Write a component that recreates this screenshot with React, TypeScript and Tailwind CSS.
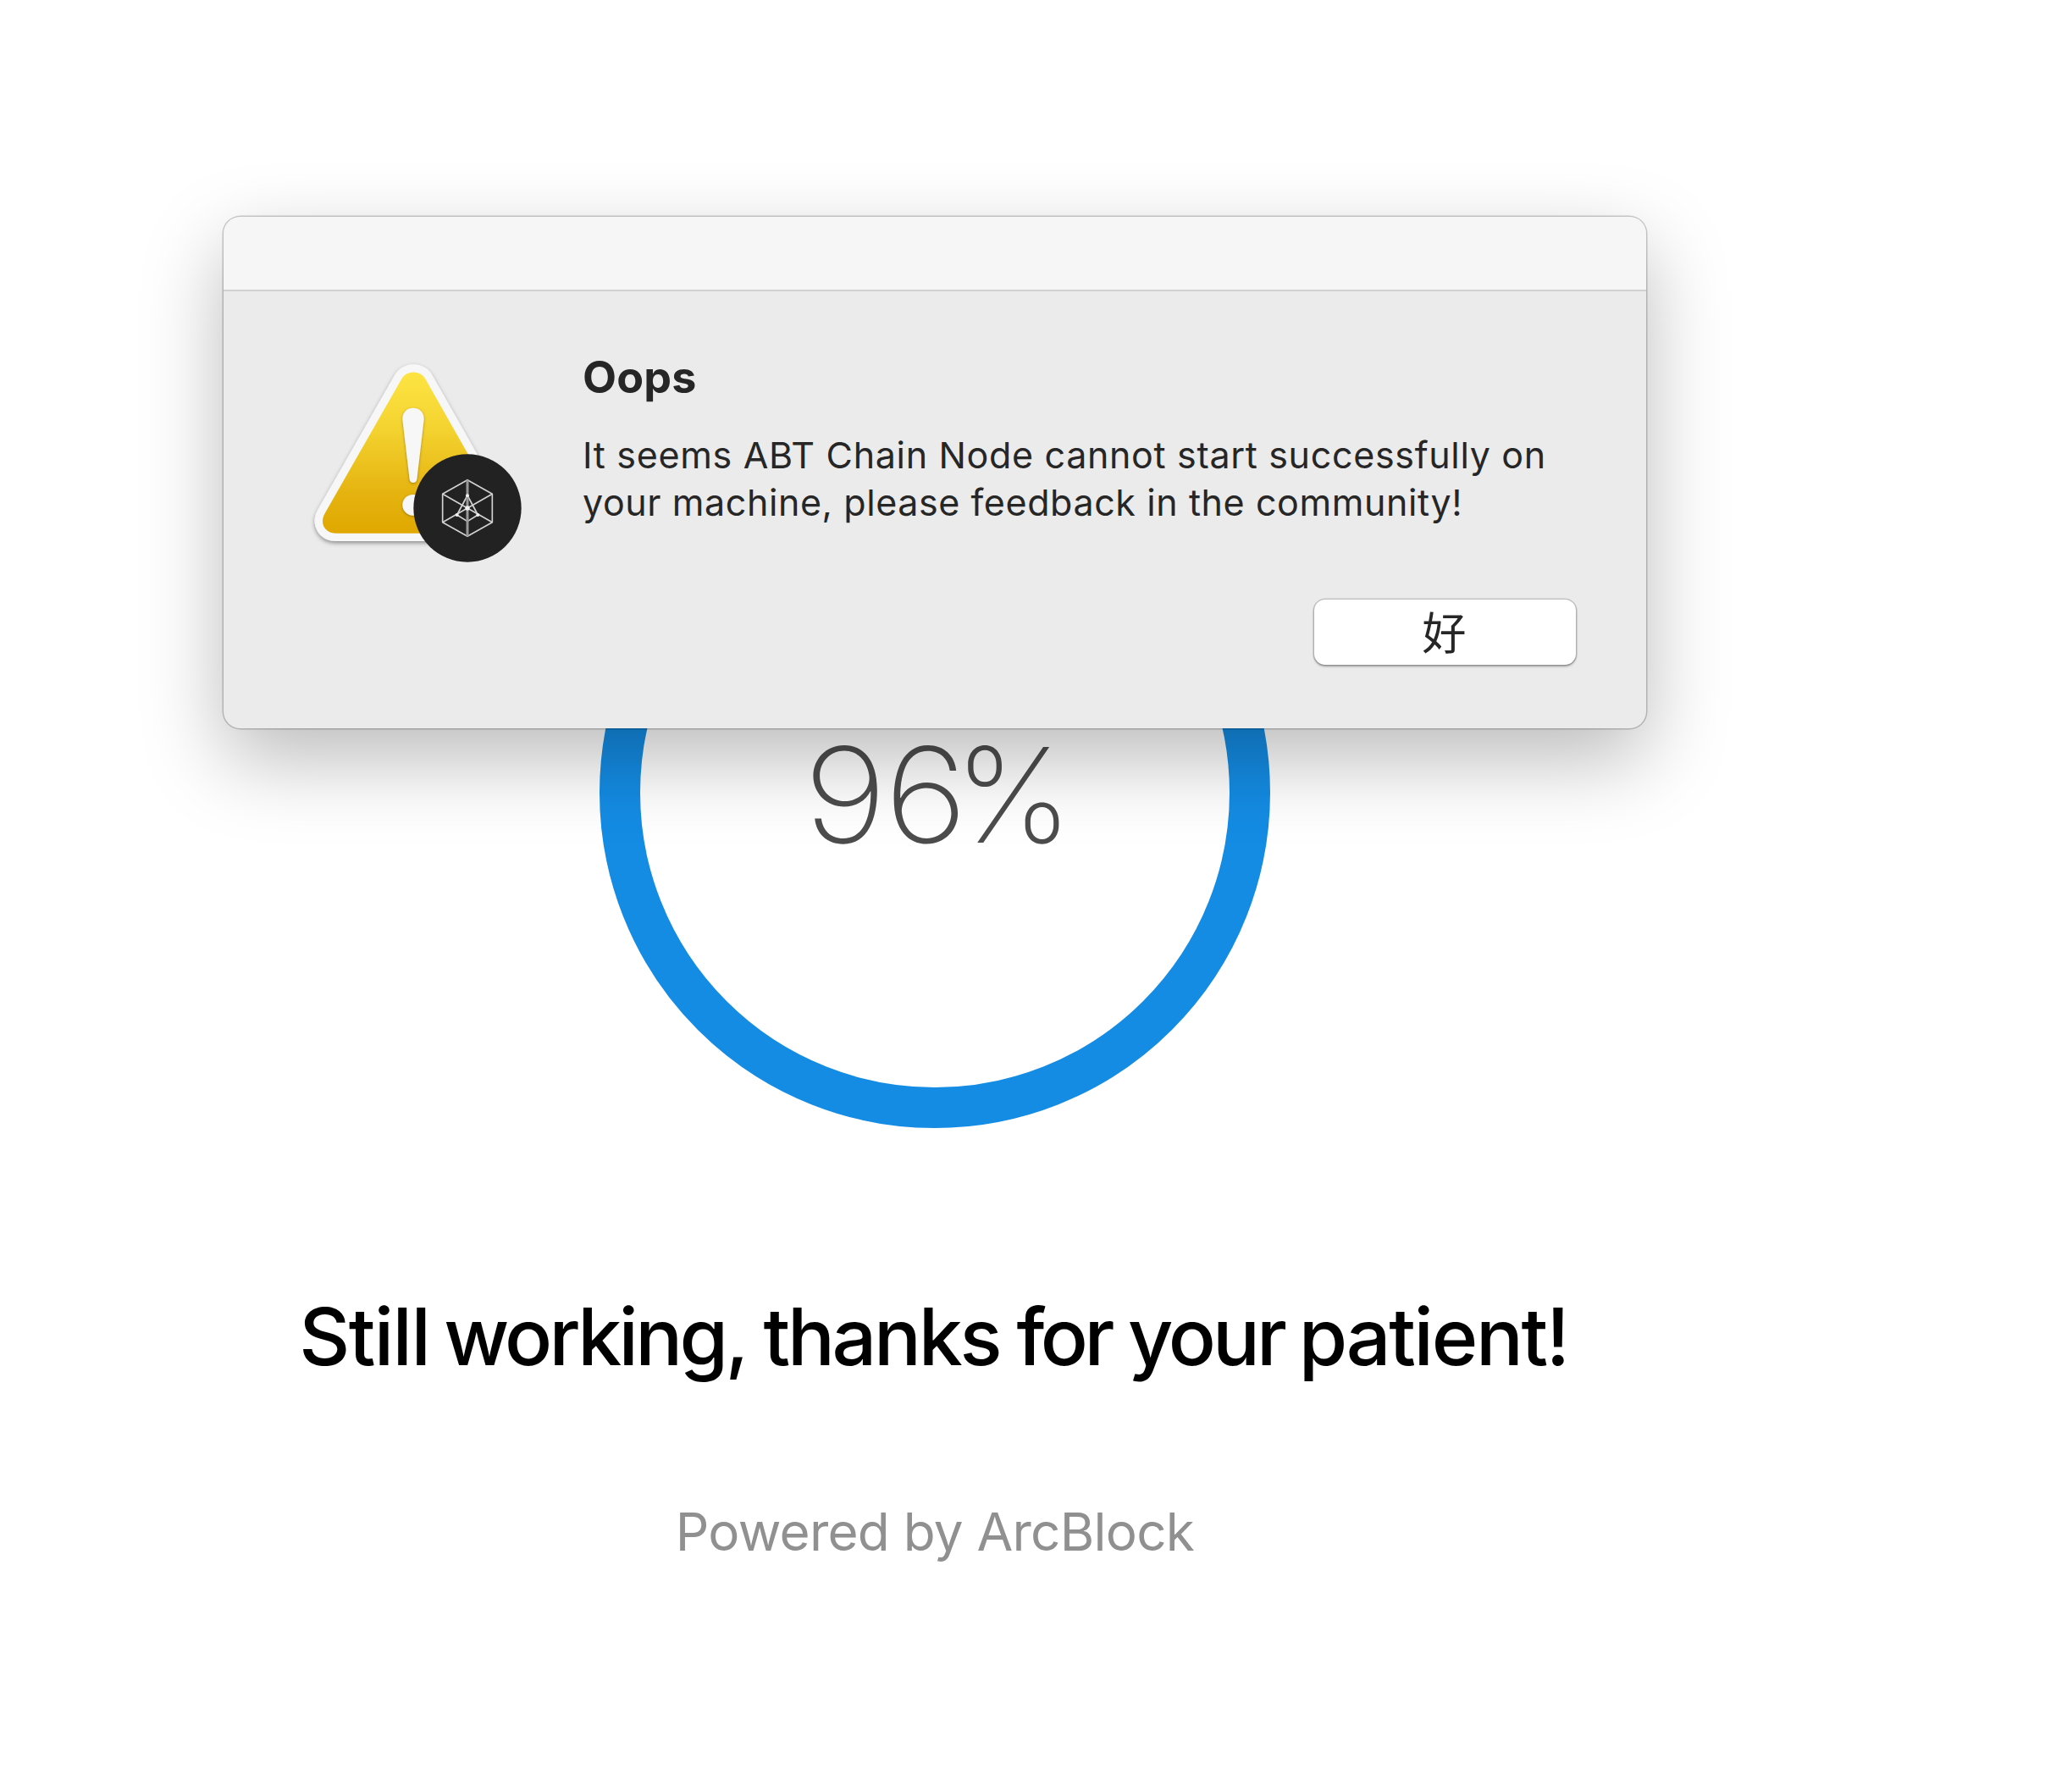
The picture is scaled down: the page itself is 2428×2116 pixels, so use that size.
import React from "react";

function WarningIcon() {
  return (
    <svg viewBox="0 0 870 810" className="h-[270px] w-[290px] shrink-0">
      <defs>
        <linearGradient id="amber" x1="0" y1="0" x2="0" y2="1">
          <stop offset="0" stopColor="#fde443" />
          <stop offset="0.35" stopColor="#f4d330" />
          <stop offset="0.75" stopColor="#e5b310" />
          <stop offset="1" stopColor="#e0a800" />
        </linearGradient>
        <filter id="soft" x="-20%" y="-20%" width="140%" height="140%">
          <feDropShadow dx="0" dy="7" stdDeviation="8" floodColor="#000" floodOpacity="0.4" />
        </filter>
        <filter id="markShadow" x="-30%" y="-10%" width="160%" height="130%">
          <feDropShadow dx="0" dy="3" stdDeviation="5" floodColor="#6b4b00" floodOpacity="0.6" />
        </filter>
      </defs>
      <path
        d="M372 114C390 80 440 80 458 114L728 590C746 624 728 659 686 659H142C100 659 82 624 100 590Z"
        fill="#f7f7f7" stroke="#f7f7f7" strokeWidth="56" strokeLinejoin="round" filter="url(#soft)"
      />
      <path
        d="M372 114C390 80 440 80 458 114L728 590C746 624 728 659 686 659H142C100 659 82 624 100 590Z"
        fill="url(#amber)"
      />
      <g fill="#f7f7f7" filter="url(#markShadow)">
        <path d="M376 256C374 202 454 202 452 256L427 468C425 484 403 484 401 468Z" />
        <circle cx="413" cy="559" r="37" />
      </g>
      <circle cx="606" cy="570" r="191" fill="#222" />
      <g fill="none" stroke="#d2d2d2" strokeWidth="5" strokeLinejoin="round">
        <path d="M606 470L694 520V620L606 670L518 620V520Z" />
        <path d="M518 520L694 620M694 520L518 620" />
        <path d="M606 525L569 594L606 617L643 594Z" />
        <path d="M606 470V670" stroke="#999" strokeWidth="9" />
      </g>
      <g fill="#f0f0f0">
        <circle cx="606" cy="570" r="8" />
        <circle cx="606" cy="526" r="6" />
        <circle cx="569" cy="594" r="6" />
        <circle cx="643" cy="594" r="6" />
      </g>
    </svg>
  );
}

function Dialog() {
  return (
    <div
      role="alertdialog"
      className="absolute left-[264px] top-[256px] flex h-[604px] w-[1680px] flex-col overflow-hidden rounded-[20px] bg-[#ebebeb] text-[#262626] shadow-[0_0_0_1.5px_rgba(0,0,0,0.2),0_36px_96px_rgba(0,0,0,0.27)]"
    >
      <div className="h-[88px] shrink-0 border-b-2 border-[#d1d1d1] bg-[#f6f6f6]" />
      <div className="flex pl-[86px] pt-[66px]">
        <WarningIcon />
        <div className="flex flex-col pl-[48px] pt-[4px]">
          <div className="text-[52px] font-bold leading-[64px] tracking-[0.2px]">Oops</div>
          <p className="mt-[31px] whitespace-nowrap text-[43px] leading-[56px]">
            <span className="tracking-[0.67px]">It seems ABT Chain Node cannot start successfully on</span>
            <br />
            <span className="tracking-[0.59px]">your machine, please feedback in the community!</span>
          </p>
        </div>
      </div>
      <div className="mt-[28px] flex justify-end pr-[83px]">
        <button className="flex h-[77px] w-[309px] items-center justify-center rounded-[13px] bg-white pb-[4px] pr-[2px] font-['Noto_Sans_CJK_SC',sans-serif] text-[52px] leading-none shadow-[0_0_0_1.5px_rgba(0,0,0,0.16),0_2px_3px_rgba(0,0,0,0.3)]">
          好
        </button>
      </div>
    </div>
  );
}

export default function App() {
  return (
    <main className="relative h-[2116px] w-[2428px] overflow-hidden bg-white font-['Inter',sans-serif]">
      <div className="flex w-[2208px] flex-col items-center pt-[540px]">
        <div className="grid size-[792px] place-items-center *:[grid-area:1/1]">
          <svg viewBox="0 0 792 792" className="size-[792px]">
            <circle cx="396" cy="396" r="372" fill="none" stroke="#148ce4" strokeWidth="48" />
          </svg>
          <div className="flex pl-[7px] pt-[6px] text-[156px] font-extralight leading-[190px] text-[#4d4d4d]">
            <span className="origin-left scale-x-108 tracking-[-2.7px]">96</span>
            <span className="ml-[2px]">%</span>
          </div>
        </div>
        <h1 className="mt-[190px] whitespace-nowrap pr-[3px] text-[93px] font-medium leading-[112px] tracking-[-3.92px] text-black [word-spacing:3px]">
          <span className="mr-[-7px] tracking-[-1.6px]">Still</span>{" "}
          <span className="mr-[-3.3px] tracking-[-3.7px]">working,</span>{" "}
          <span className="mr-[-3.7px] tracking-[-3.3px]">thanks</span>{" "}
          <span className="mr-[-4.1px] tracking-[-4.4px]">for</span>{" "}
          <span className="mr-[-6.2px]">your</span>{" "}
          <span className="tracking-[-2.35px]">patient!</span>
        </h1>
        <p className="mt-[138px] whitespace-nowrap text-[62px] leading-[74px] tracking-[-0.76px] text-[#909090]">
          Powered by ArcBlock
        </p>
      </div>
      <Dialog />
    </main>
  );
}
